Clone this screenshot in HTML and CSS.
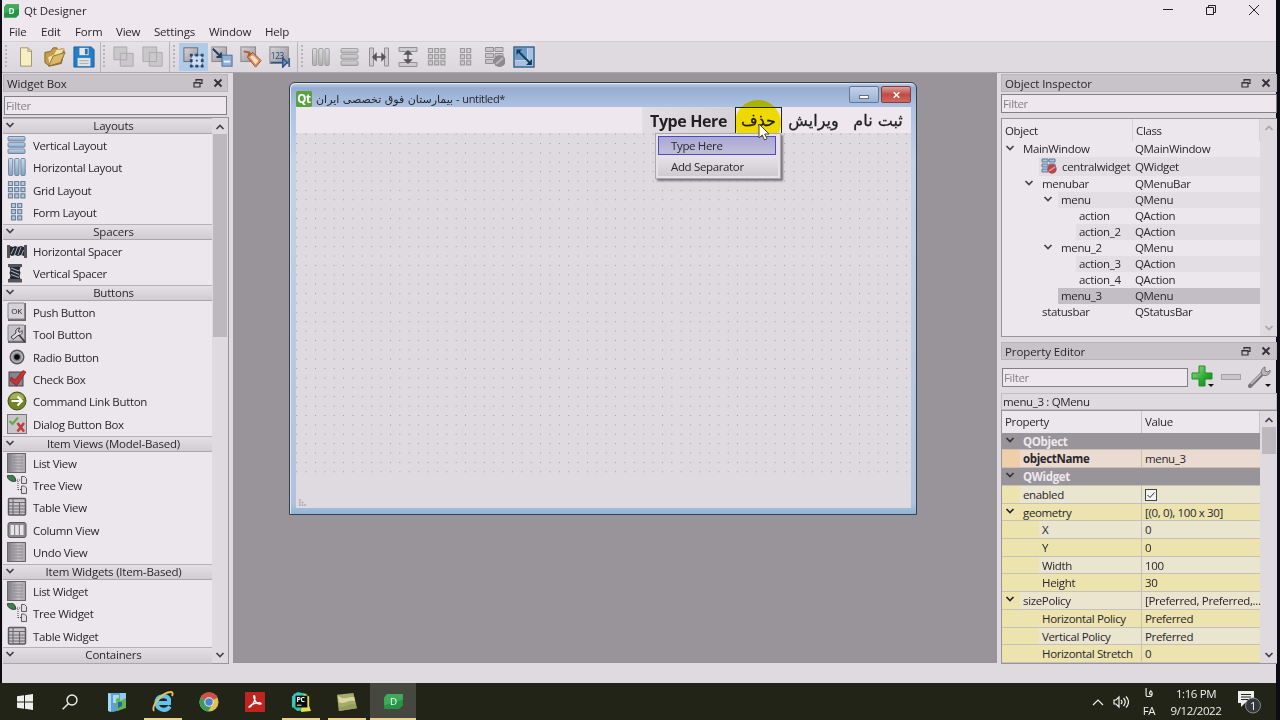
FILE: index.html
```html
<!DOCTYPE html>
<html lang="en">
<head>
    <meta charset="UTF-8">
    <meta name="viewport" content="width=device-width, initial-scale=1.0">
    <title>Qt Designer</title>
    <link rel="stylesheet" href="styles.css">
</head>
<body>
    <!-- shared icons -->
    <svg class="defs" width="0" height="0">
        <defs>
            <linearGradient id="blue" x1="0" y1="0" x2="0" y2="1"><stop offset="0" stop-color="#c9dcee"/><stop offset="1" stop-color="#7fa2c4"/></linearGradient>
            <linearGradient id="grey" x1="0" y1="0" x2="1" y2="1"><stop offset="0" stop-color="#d8d5d9"/><stop offset="1" stop-color="#96949a"/></linearGradient>
            <linearGradient id="green" x1="0" y1="0" x2="1" y2="1"><stop offset="0" stop-color="#9be78d"/><stop offset=".6" stop-color="#26a82c"/><stop offset="1" stop-color="#13801d"/></linearGradient>
            <linearGradient id="list" x1="0" y1="0" x2="1" y2="0"><stop offset="0" stop-color="#7f7c82"/><stop offset=".6" stop-color="#bfbcc0"/><stop offset="1" stop-color="#a9a6ab"/></linearGradient>
            <pattern id="dots" x="0.2" y="0.6" width="9.38" height="9.38" patternUnits="userSpaceOnUse"><rect width="1" height="1" fill="#9c989e"/></pattern>
        </defs>
        <symbol id="chevron" viewBox="0 0 10 10"><path d="M1.5 3l3.5 3.6L8.5 3" fill="none" stroke="currentColor" stroke-width="1.7"/></symbol>
        <symbol id="float" viewBox="0 0 10 10"><path d="M3 3.5V1.5h6v4H7M3 1.8h6M1 4.5h6v4.5H1zM1 5h6" fill="none" stroke="currentColor" stroke-width="1.2"/></symbol>
        <symbol id="cross" viewBox="0 0 10 10"><path d="M1.5 1.5l7 7M8.500 1.500l-7 7" fill="none" stroke="currentColor" stroke-width="1.9"/></symbol>
        <symbol id="rows" viewBox="0 0 20 20"><g stroke="#6b7f98" stroke-width=".9" fill="url(#blue)"><rect x="1" y="1.5" width="17" height="4.5" rx="1"/><rect x="1" y="7.7" width="17" height="4.5" rx="1"/><rect x="1" y="14" width="17" height="4.5" rx="1"/></g></symbol>
        <symbol id="cols" viewBox="0 0 20 20"><g stroke="#6b7f98" stroke-width=".9" fill="url(#blue)"><rect x="1.5" y="1.5" width="4.3" height="17" rx="1"/><rect x="7.7" y="1.5" width="4.3" height="17" rx="1"/><rect x="13.9" y="1.5" width="4.3" height="17" rx="1"/></g></symbol>
        <symbol id="grid" viewBox="0 0 20 20"><path stroke="#6d829c" stroke-width="1.2" fill="#b4cbe1" d="M1.500 1.500h4v4h-4zM7.700 1.500h4v4h-4zM13.900 1.500h4v4h-4zM1.500 7.700h4v4h-4zM7.700 7.700h4v4h-4zM13.900 7.700h4v4h-4zM1.500 13.900h4v4h-4zM7.700 13.900h4v4h-4zM13.900 13.900h4v4h-4z"/></symbol>
        <symbol id="form" viewBox="0 0 20 20"><path stroke="#6d829c" stroke-width="1.2" fill="#b4cbe1" d="M4.500 1.500h4v4h-4zM10.700 1.500h4v4h-4zM4.500 7.700h4v4h-4zM10.700 7.700h4v4h-4zM4.500 13.900h4v4h-4zM10.700 13.900h4v4h-4z"/></symbol>
        <symbol id="hspacer" viewBox="0 0 20 20"><path d="M0 4h3v13H0zM17 4h3v13h-3z" fill="#55545b"/><path d="M3 5l3 1 2-1 3 1 3-1 3 1v9l-3-1-3 1-3-1-3 1-2-1z" fill="#25272e"/><path d="M4 13l3-6M7.500 14l3-8M11 14l3-8M14.500 14l2-5" stroke="#9fb0c4" stroke-width="1"/></symbol>
        <symbol id="vspacer" viewBox="0 0 20 20"><path d="M1 1h14v3H1zM1 16h14v3.500H1z" fill="#55545b"/><path d="M2.500 4h11l-1 3 1 3-1 3 1 3h-11l1-3-1-3 1-3z" fill="#25272e"/><path d="M4 5l8 3M4 8l8 3.500M4 11.500l8 3" stroke="#9fb0c4" stroke-width="1.1"/></symbol>
        <symbol id="tool" viewBox="0 0 20 20"><path d="M1 1h18v18H1z" fill="#6a686d"/><rect x="1" y="1" width="16.5" height="16" rx="1" fill="#c5c3c8" stroke="#87848a"/><path d="M4 13l5-4c-1-3 1-5 4-5l-2 3 2 1.500 2-2c1 3-1 5-4 5l-5 4z" fill="#dddbe0" stroke="#3e3c42"/><path d="M12 11l6 7" stroke="#3e3c42" stroke-width="1.8"/></symbol>
        <symbol id="radio" viewBox="0 0 20 20"><circle cx="10" cy="10" r="6.8" fill="#b3b1b5" stroke="#59575c" stroke-width="1.4"/><circle cx="10" cy="10" r="4.3" fill="#85838a"/><circle cx="10" cy="10" r="2.8" fill="#080808"/></symbol>
        <symbol id="check" viewBox="0 0 20 20"><rect x="2" y="3" width="14" height="14" fill="#87858b" stroke="#444247"/><path d="M4 8l4 3 8-9.500 3 1.500L9.500 17 3.500 12z" fill="#c93235" stroke="#7b1b20" stroke-width=".7"/></symbol>
        <symbol id="command" viewBox="0 0 20 20"><circle cx="10" cy="10" r="9" fill="#718425" stroke="#465415"/><path d="M3 8a7 6 0 0 1 14 0z" fill="#a2b15a"/><path d="M4.500 10h10M10.500 5.500L15 10l-4.500 4.500" fill="none" stroke="#fff" stroke-width="2"/></symbol>
        <symbol id="dialog" viewBox="0 0 20 20"><rect x=".5" y=".5" width="19" height="19" fill="#c9c6ca" stroke="#77747a"/><path d="M2.500 7l3 3 5.500-6.500" fill="none" stroke="#61a94c" stroke-width="2.2"/><path d="M10.500 9l6.500 8.500M17 9l-6.500 8.500" stroke="#c23a3f" stroke-width="2.5"/></symbol>
        <symbol id="listv" viewBox="0 0 20 20"><rect x=".5" y=".5" width="18" height="19" fill="url(#list)" stroke="#68656b"/><path d="M3 4h1.500M6 4h10M3 7h1.500M6 7h10M3 10h1.500M6 10h10M3 13h1.500M6 13h10M3 16h1.500M6 16h10" stroke="#88858b" stroke-width=".8"/></symbol>
        <symbol id="tree" viewBox="0 0 20 20"><path d="M0 1c3-2 7-1 8 2l1 3C5 7.500 1 5 0 1z" fill="#467b50" stroke="#244c30"/><path d="M10 5h4M11 6v9M11 14.500h4" stroke="#444" stroke-dasharray="1 1" fill="none"/><path d="M14.500 1.500h3l2 2v5h-5zM14.500 11h3l2 2v5.500h-5z" fill="#e1dee3" stroke="#5e5b61"/></symbol>
        <symbol id="table" viewBox="0 0 20 20"><rect x="1.5" y="1.5" width="17" height="16.5" rx="1" fill="#c8c5ca" stroke="#5c5a5f" stroke-width="1.5"/><path d="M2 5.500h16M2 9h16M2 12h16M2 15h16M6 2v16M12.500 5v13" stroke="#6b696e" stroke-width="1.1"/></symbol>
        <symbol id="column" viewBox="0 0 20 20"><rect x="1" y="2.5" width="18" height="15" rx="2" fill="#8b898e" stroke="#5a585d"/><path d="M3.500 5h3.500v10H3.500zM8.200 5h3.500v10H8.200zM13 5h3.500v10H13z" fill="#e8e5e9"/></symbol>
    </svg>

    <div class="app">
        <header class="titlebar">
            <svg class="app-icon" viewBox="0 0 20 18"><path d="M3 0h17v14l-4 4H0V4z" fill="#279346"/><path d="M3 0h17v6L0 12V4z" fill="#47b562" opacity=".7"/><text x="10" y="13" font-size="11" font-weight="700" text-anchor="middle" fill="#eafbe9">D</text></svg>
            <span class="app-title">Qt Designer</span>
            <div class="win-buttons">
                <svg viewBox="0 0 12 12"><path d="M1 5.500h10"/></svg>
                <svg viewBox="0 0 12 12"><path d="M1.500 3.500h7v7h-7zM3.500 3.500v-2h7v7h-2"/></svg>
                <svg viewBox="0 0 12 12"><path d="M1 1l10 10M11 1L1 11"/></svg>
            </div>
        </header>
        <nav class="menubar">
            <span class="m-file">File</span><span class="m-edit">Edit</span><span class="m-form">Form</span><span class="m-view">View</span><span class="m-settings">Settings</span><span class="m-window">Window</span><span>Help</span>
        </nav>

        <div class="toolbar">
            <div class="tool-group group-file">
                <svg viewBox="0 0 24 24"><path d="M6 2h8l4 3v17H6z" fill="#f5efc3" stroke="#9b9069"/><path d="M14 2v4h4" fill="#d6c995" stroke="#9b9069" stroke-width=".7"/></svg>
                <svg viewBox="0 0 24 24"><path d="M1 7l6-1 3-4h4l1 3 5-2 2 2-3 14-13 3-5-4z" fill="#c79c4b" stroke="#816127"/><path d="M4 12l7-3 2-5 9-1-4 8-12 10z" fill="#f4e4a3" stroke="#b8934a" stroke-width=".7"/><path d="M5 22l5-11 13-4-5 11z" fill="#dcb969" stroke="#8b692d"/></svg>
                <svg viewBox="0 0 24 24"><path d="M1 1h19l3 3v19H1z" fill="#237fc5" stroke="#1b609b"/><path d="M7 2h10v8H7z" fill="#e7e7e8"/><path d="M13 3h3v6h-3z" fill="#266faa"/><path d="M5 13h14v9H5z" fill="#e2e0e0"/><path d="M7 16h10M7 19h10" stroke="#aaa"/></svg>
            </div>
            <div class="tool-group group-edit">
                <svg viewBox="0 0 24 24"><path d="M1 1h14v14H1zM8 8h14v14H8z" fill="#cbc8cb" stroke="#aaa7ab"/></svg>
                <svg viewBox="0 0 24 24"><path d="M8 7h14v15H8zM1 1h15v16H1z" fill="#cbc8cb" stroke="#aaa7ab"/></svg>
            </div>
            <div class="tool-group group-mode">
                <span class="tool-active"><svg viewBox="0 0 24 24"><rect x="1" y="2" width="15" height="15" fill="url(#grey)" stroke="#65666d"/><rect x="9" y="10" width="12" height="12" fill="#cbdcf3" stroke="#3b5b83" stroke-dasharray="2 1"/><path d="M7.500 8.500h3v3h-3zM13.500 8.500h3v3h-3zM19.500 8.500h3v3h-3zM7.500 14.500h3v3h-3zM19.500 14.500h3v3h-3zM7.500 20.500h3v3h-3zM13.500 20.500h3v3h-3zM19.500 20.500h3v3h-3zM14 15h2v2h-2z" fill="#294570"/></svg></span>
                <svg viewBox="0 0 24 24"><rect x="1" y="1" width="16" height="16" fill="url(#grey)" stroke="#858288"/><path d="M2 3l8 8M11 7v5H6" fill="none" stroke="#263f58" stroke-width="2.2"/><rect x="12" y="10" width="11" height="12" fill="#91b0d9" stroke="#456998"/><path d="M14 16h7v2h-7z" fill="#f1f4ff"/></svg>
                <svg viewBox="0 0 24 24"><rect x="1" y="1" width="16" height="16" fill="url(#grey)" stroke="#858288"/><path d="M4 6l6 1 3 4M10 7l-1 5" fill="none" stroke="#b75d35" stroke-width="2"/><path d="M8 12l6-5 9 9-6 7z" fill="#e3905b" stroke="#8b4b2c"/><path d="M11 12l3-2 6 6-3 4z" fill="#f6dfcc"/></svg>
                <svg viewBox="0 0 24 24"><rect x="1" y="1" width="20" height="18" fill="url(#grey)" stroke="#858288"/><text x="2" y="14" font-size="9" fill="#20467e">123</text><path d="M2 18h12M15 13l5 5-5 5zM22 13v10" fill="#7398cd" stroke="#28548e" stroke-width="1.6"/></svg>
            </div>
            <div class="tool-group group-layout">
                <svg class="muted" viewBox="0 0 20 20"><use href="#cols"/></svg>
                <svg class="muted" viewBox="0 0 20 20"><use href="#rows"/></svg>
                <svg viewBox="0 0 20 20"><path d="M.5 1h4v18h-4zM15.500 1h4v18h-4z" fill="#cecbcf" stroke="#929095"/><path d="M5 10h10M7 7l-3 3 3 3zM13 7l3 3-3 3z" fill="#56555a" stroke="#56555a" stroke-width="1.5"/></svg>
                <svg viewBox="0 0 20 20"><path d="M1 .5h18v4H1zM1 15.500h18v4H1z" fill="#cecbcf" stroke="#929095"/><path d="M10 5v10M7 7l3-3 3 3zM7 13l3 3 3-3z" fill="#56555a" stroke="#56555a" stroke-width="1.5"/></svg>
                <svg class="muted" viewBox="0 0 20 20"><use href="#grid"/></svg>
                <svg class="muted" viewBox="0 0 20 20"><use href="#form"/></svg>
                <svg viewBox="1 1 20 20"><path d="M1.500 1.500h8v4h-8zM11 1.500h8v4h-8zM1.500 7.500h8v4h-8zM11 7.500h8v4h-8zM1.500 13.500h8v4h-8z" fill="#c8c5c9" stroke="#929095"/><circle cx="15.5" cy="15" r="6" fill="#8c8a8f"/><path d="M12 18l7-6" stroke="#bcb9be" stroke-width="2"/></svg>
                <svg class="adjust" viewBox="0 0 22 22"><rect x="1" y="1" width="20" height="20" fill="#a9c1df" stroke="#376593" stroke-width="1.5"/><path d="M2 2h12v12H2z" fill="#6e9ac9"/><path d="M2 14.500h12.500V2" fill="none" stroke="#c4d4e8"/><path d="M5 5l12 12" stroke="#123d5c" stroke-width="1.8"/><path d="M3.500 3.500H9l-5.500 5.500zM19 19h-6l6-6z" fill="#123d5c"/></svg>
            </div>
        </div>

        <main class="workspace">
            <aside class="widget-box">
                <div class="dock-title"><span>Widget Box</span><svg><use href="#float"/></svg><svg><use href="#cross"/></svg></div>
                <div class="filter">Filter</div>
                <div class="widget-frame">
                    <div class="widget-list">
                        <div class="group"><svg><use href="#chevron"/></svg>Layouts</div>
                        <div class="widget"><svg><use href="#rows"/></svg>Vertical Layout</div>
                        <div class="widget"><svg><use href="#cols"/></svg>Horizontal Layout</div>
                        <div class="widget"><svg><use href="#grid"/></svg>Grid Layout</div>
                        <div class="widget"><svg><use href="#form"/></svg>Form Layout</div>
                        <div class="group"><svg><use href="#chevron"/></svg>Spacers</div>
                        <div class="widget"><svg><use href="#hspacer"/></svg>Horizontal Spacer</div>
                        <div class="widget"><svg><use href="#vspacer"/></svg>Vertical Spacer</div>
                        <div class="group"><svg><use href="#chevron"/></svg>Buttons</div>
                        <div class="widget"><svg viewBox="0 0 20 20"><path d="M1 1h18v18H1z" fill="#6a686d"/><rect x="1" y="1" width="16.5" height="16" rx="1" fill="#d6d3d8" stroke="#87848a"/><text x="9.5" y="12" font-size="8" text-anchor="middle" fill="#222">OK</text></svg>Push Button</div>
                        <div class="widget"><svg><use href="#tool"/></svg>Tool Button</div>
                        <div class="widget"><svg><use href="#radio"/></svg>Radio Button</div>
                        <div class="widget"><svg><use href="#check"/></svg>Check Box</div>
                        <div class="widget"><svg><use href="#command"/></svg>Command Link Button</div>
                        <div class="widget"><svg><use href="#dialog"/></svg>Dialog Button Box</div>
                        <div class="group"><svg><use href="#chevron"/></svg>Item Views (Model-Based)</div>
                        <div class="widget"><svg><use href="#listv"/></svg>List View</div>
                        <div class="widget"><svg><use href="#tree"/></svg>Tree View</div>
                        <div class="widget"><svg><use href="#table"/></svg>Table View</div>
                        <div class="widget"><svg><use href="#column"/></svg>Column View</div>
                        <div class="widget"><svg><use href="#listv"/></svg>Undo View</div>
                        <div class="group"><svg><use href="#chevron"/></svg>Item Widgets (Item-Based)</div>
                        <div class="widget"><svg><use href="#listv"/></svg>List Widget</div>
                        <div class="widget"><svg><use href="#tree"/></svg>Tree Widget</div>
                        <div class="widget"><svg><use href="#table"/></svg>Table Widget</div>
                        <div class="group"><svg><use href="#chevron"/></svg>Containers</div>
                    </div>
                    <div class="scrollbar"><svg class="up"><use href="#chevron"/></svg><div class="thumb"></div><svg class="down"><use href="#chevron"/></svg></div>
                </div>
            </aside>

            <section class="mdi">
                <div class="form-window">
                    <div class="form-title">
                        <svg class="qt" viewBox="0 0 16 16"><rect width="16" height="16" rx="1.5" fill="#5ba041"/><text x="8" y="12" font-size="11.5" font-weight="700" text-anchor="middle" fill="#fff">Qt</text></svg>
                        <span class="form-name"><bdi class="persian">بیمارستان فوق تخصصی ایران</bdi> - untitled*</span>
                        <div class="mdi-min"><i></i></div>
                        <div class="mdi-close"><svg><use href="#cross"/></svg></div>
                    </div>
                    <div class="form-body">
                        <div class="form-menu" dir="rtl">
                            <span class="item-new">ثبت نام</span>
                            <span class="item-edit">ویرایش</span>
                            <span class="item-delete">حذف</span>
                            <span class="item-type" dir="ltr">Type Here</span>
                        </div>
                        <svg class="dot-grid"><rect width="100%" height="100%" fill="url(#dots)"/></svg>
                        <div class="form-status"><svg viewBox="0 0 10 10"><path d="M1 1h2v2H1zM1 4h2v2H1zM1 7h2v2H1zM4 4h2v2H4zM4 7h2v2H4zM7 7h2v2H7z" fill="#b1adb3"/></svg></div>
                    </div>
                    <div class="highlight"></div>
                    <div class="popup">
                        <div class="popup-item selected">Type Here</div>
                        <div class="popup-item">Add Separator</div>
                    </div>
                    <svg class="cursor" viewBox="0 0 12 18"><path d="M1 1v14l3.200-3 2.300 5 2.500-1.200-2.300-4.800H11z" fill="#fff" stroke="#4e4929"/></svg>
                </div>
            </section>

            <aside class="right-docks">
                <div class="dock-title"><span>Object Inspector</span><svg><use href="#float"/></svg><svg><use href="#cross"/></svg></div>
                <div class="filter">Filter</div>
                <div class="inspector">
                    <div class="tree">
                        <div class="tree-head"><span>Object</span><span>Class</span></div>
                        <div class="node"><svg><use href="#chevron"/></svg><span class="name">MainWindow</span><span class="cls">QMainWindow</span></div>
                        <div class="node level-1 alt central"><span class="name"><svg viewBox="0 0 16 16"><path d="M1 1h6v3H1zM8 1h6v3H8zM1 6h6v3H1zM8 6h6v3H8zM1 11h6v3H1z" fill="#a9c2db" stroke="#607b98"/><circle cx="11" cy="11" r="4.7" fill="#b6474c"/><path d="M8 13l6-4" stroke="#dfa4a4" stroke-width="1.5"/></svg>centralwidget</span><span class="cls">QWidget</span></div>
                        <div class="node level-1"><svg><use href="#chevron"/></svg><span class="name">menubar</span><span class="cls">QMenuBar</span></div>
                        <div class="node level-2 alt"><svg><use href="#chevron"/></svg><span class="name">menu</span><span class="cls">QMenu</span></div>
                        <div class="node level-3"><span class="name">action</span><span class="cls">QAction</span></div>
                        <div class="node level-3 alt"><span class="name">action_2</span><span class="cls">QAction</span></div>
                        <div class="node level-2"><svg><use href="#chevron"/></svg><span class="name">menu_2</span><span class="cls">QMenu</span></div>
                        <div class="node level-3 alt"><span class="name">action_3</span><span class="cls">QAction</span></div>
                        <div class="node level-3"><span class="name">action_4</span><span class="cls">QAction</span></div>
                        <div class="node level-2 current"><span class="name">menu_3</span><span class="cls">QMenu</span></div>
                        <div class="node level-1"><span class="name">statusbar</span><span class="cls">QStatusBar</span></div>
                    </div>
                    <div class="scrollbar disabled"><svg class="up"><use href="#chevron"/></svg><svg class="down"><use href="#chevron"/></svg></div>
                </div>

                <div class="dock-title property-title"><span>Property Editor</span><svg><use href="#float"/></svg><svg><use href="#cross"/></svg></div>
                <div class="property-tools">
                    <div class="filter">Filter</div>
                    <svg class="plus" viewBox="0 0 24 24"><path d="M8 1h6v7h7v6h-7v7H8v-7H1V8h7z" fill="url(#green)" stroke="#28862a"/><path d="M17 19h6l-3 3z" fill="#111"/></svg>
                    <svg class="minus" viewBox="0 0 20 6"><rect x=".5" y=".5" width="19" height="5" fill="#c8c5c9" stroke="#a5a2a7"/></svg>
                    <svg class="wrench" viewBox="0 0 24 24"><path d="M2 21L15 8" stroke="#77757a" stroke-width="4" stroke-linecap="round"/><path d="M3 19L15 7" stroke="#c6c4c9" stroke-width="1.5"/><path d="M14 10c-2-3 0-7 3-8v4l3 1 2-2c1 4-4 7-8 5z" fill="#b6b4b9" stroke="#77757a"/><path d="M17 19h6l-3 3z" fill="#111"/></svg>
                </div>
                <div class="object-label">menu_3 : QMenu</div>
                <div class="properties">
                    <div class="prop-table">
                        <div class="prop-head"><span>Property</span><span>Value</span></div>
                        <div class="prop section"><svg><use href="#chevron"/></svg><span>QObject</span></div>
                        <div class="prop peach"><b>objectName</b><span>menu_3</span></div>
                        <div class="prop section"><svg><use href="#chevron"/></svg><span>QWidget</span></div>
                        <div class="prop light"><span>enabled</span><span><svg class="checkbox" viewBox="0 0 12 12"><rect x=".5" y=".5" width="11" height="11" fill="#f5f1f5" stroke="#444"/><path d="M2.500 6l2.500 2.500 4.500-5" fill="none" stroke="#333"/></svg></span></div>
                        <div class="prop"><svg><use href="#chevron"/></svg><span>geometry</span><span>[(0, 0), 100 x 30]</span></div>
                        <div class="prop light sub"><span>X</span><span>0</span></div>
                        <div class="prop sub"><span>Y</span><span>0</span></div>
                        <div class="prop light sub"><span>Width</span><span>100</span></div>
                        <div class="prop sub"><span>Height</span><span>30</span></div>
                        <div class="prop light"><svg><use href="#chevron"/></svg><span>sizePolicy</span><span>[Preferred, Preferred,...</span></div>
                        <div class="prop sub"><span>Horizontal Policy</span><span>Preferred</span></div>
                        <div class="prop light sub"><span>Vertical Policy</span><span>Preferred</span></div>
                        <div class="prop sub"><span>Horizontal Stretch</span><span>0</span></div>
                    </div>
                    <div class="scrollbar"><svg class="up"><use href="#chevron"/></svg><div class="thumb"></div><svg class="down"><use href="#chevron"/></svg></div>
                </div>
            </aside>
        </main>
        <div class="statusbar"></div>
    </div>

    <footer class="taskbar">
        <div class="task start"><svg viewBox="0 0 16 16"><path d="M0 2.300l7-1v6.200H0zM8 1.200L16 0v7.500H8zM0 8.500h7v6.200l-7-1zM8 8.500h8V16l-8-1.200z" fill="#eee"/></svg></div>
        <div class="task search"><svg viewBox="0 0 16 16"><circle cx="10" cy="6" r="5" fill="none" stroke="#eee" stroke-width="1.4"/><path d="M6.500 9.500L.7 15.300" stroke="#eee" stroke-width="1.4"/></svg></div>
        <div class="task"><svg viewBox="0 0 20 20"><path d="M1 1h12v17l-7 2-5-1z" fill="#5f9fd2"/><path d="M1 1l3 1v18l-3-1z" fill="#a2d8f0"/><path d="M6 3h6v8H6z" fill="#a8d9f2"/><path d="M9 7l10-5v14l-9 3z" fill="#62b557"/><path d="M13 1h6v5l-6 3z" fill="#8fcbed"/><path d="M11 10h4v4l-4 2z" fill="#2965a5"/></svg></div>
        <div class="task running ie"><svg viewBox="0 0 22 22"><path d="M18 15.500C13 22 4.500 18 4.500 11.500S14 3 17 8v4H6" fill="none" stroke="#62c2ed" stroke-width="4"/><path d="M2 20C-1 15 10 1 19 1c2 0 2 2 1 4" fill="none" stroke="#e7c153" stroke-width="1.8"/></svg></div>
        <div class="task"><svg viewBox="0 0 22 22"><circle cx="11" cy="11" r="10.5" fill="#ddc153"/><path d="M11 11L1.800 6A10.500 10.500 0 0 1 20.500 6z" fill="#ce5145"/><path d="M11 11L1.800 6A10.500 10.500 0 0 0 10 21.500l4-7z" fill="#40995a"/><circle cx="11" cy="11" r="5.2" fill="#eee"/><circle cx="11" cy="11" r="4.1" fill="#4a82cc"/></svg></div>
        <div class="task"><svg viewBox="0 0 20 20"><rect width="20" height="20" rx="1" fill="#bf2520"/><path d="M4 15c2 1 6-6 6-9 0-3-2-3-1 0 1 4 4 7 7 6 1-2-8-2-12 3z" fill="none" stroke="#fff" stroke-width="1.3"/></svg></div>
        <div class="task running"><svg class="pc" viewBox="0 0 22 22"><path d="M1 5l6-5 10 2 3 8-3 10-10 1-6-5z" fill="#2fc69b"/><path d="M14 2l6 3v10l2 6-11 1z" fill="#e7df55"/><path d="M3 2l8-1-7 12-3 5z" fill="#42c4d0"/><path d="M5 4h13v13H5z" fill="#080b09"/><text x="6" y="11" font-size="7.5" font-weight="700" fill="#fff">PC</text><path d="M6.500 14.500h5" stroke="#fff"/></svg></div>
        <div class="task running notes"><svg viewBox="0 0 22 20"><path d="M0 2l18-2 4 17-20 3z" fill="#a5ac68"/><path d="M1 3c8 6 12 0 18 2l1 4C13 6 8 14 2 10z" fill="#d8d7a3"/><path d="M2 15c7 2 11-5 19-2v4L3 20z" fill="#949d61"/></svg></div>
        <div class="task running active"><svg viewBox="0 0 20 16"><path d="M3 0h17v12l-4 4H0V4z" fill="#279346"/><path d="M3 0h17v6L0 12V4z" fill="#47b562" opacity=".7"/><text x="10" y="12" font-size="10.5" text-anchor="middle" fill="#eafbe9">D</text></svg></div>
        <div class="tray">
            <svg class="tray-up" viewBox="0 0 12 8"><path d="M1 7l5-5 5 5"/></svg>
            <svg class="volume" viewBox="0 0 16 14"><path d="M1 5h2l3-3v10L3 9H1zM8 5q2 2 0 4M10.500 3q3.500 4 0 8M13 1.500q5 5.500 0 11"/></svg>
            <div class="lang"><span class="persian">فا</span><span>FA</span></div>
            <div class="clock"><span>1:16 PM</span><span>9/12/2022</span></div>
            <svg class="notify" viewBox="0 0 24 24"><path d="M1 1h16v12H8l-4 4v-4H1z" fill="#eee"/><path d="M4 4.500h10M4 7h10M4 9.500h8" stroke="#222419"/><circle cx="16" cy="15.5" r="7.5" fill="#35373a" stroke="#8a8c88"/><text x="16" y="19.5" font-size="11" text-anchor="middle" fill="#fff">1</text></svg>
        </div>
    </footer>
</body>
</html>
```

FILE: styles.css
```css
* {
    box-sizing: border-box;
}
body {
    margin: 0;
    width: 1280px;
    height: 720px;
    overflow: hidden;
    background: #0d0b14;
    color: #29262c;
    font-family: "Open Sans", "Noto Sans", sans-serif;
    font-size: 11.5px;
    letter-spacing: -0.35px;
    line-height: 16px;
    white-space: nowrap;
}
svg {
    display: block;
    flex: none;
}
.defs {
    position: absolute;
}
.persian {
    font-family: "DejaVu Sans", sans-serif;
    letter-spacing: 0;
}
.app {
    width: 1274px;
    height: 683px;
    margin-left: 2px;
    background: #dfdae0;
}

/* main window chrome */
.titlebar {
    display: flex;
    align-items: center;
    height: 22px;
    padding-left: 2px;
    background: #eee8ee;
}
.app-icon {
    width: 15px;
    height: 14px;
}
.app-title {
    margin-left: 5px;
    letter-spacing: -0.1px;
}
.win-buttons {
    display: flex;
    gap: 31px;
    margin: -2px 0 0 auto;
    padding-right: 16px;
}
.win-buttons svg {
    width: 12px;
    height: 12px;
    fill: none;
    stroke: #222;
}
.menubar {
    display: flex;
    height: 19px;
    padding: 2px 0 0 7px;
    background: #eee8ee;
    letter-spacing: -0.2px;
}
.m-file { width: 32px; }
.m-edit { width: 34px; }
.m-form { width: 41px; }
.m-view { width: 38px; }
.m-settings { width: 55px; }
.m-window { width: 56px; }
.toolbar {
    display: flex;
    height: 32px;
    border-top: 1px solid #d3ced4;
    border-bottom: 1px solid #aaa5ab;
    background: #dfdae0;
}
.tool-group {
    display: flex;
    align-items: center;
    gap: 7px;
    border-right: 1px solid #b9b4ba;
    background: linear-gradient(#e6e1e7, #dcd7dd);
}
.tool-group::before {
    content: "";
    width: 2px;
    height: 24px;
    background: repeating-linear-gradient(#b8b4b9 0 2px, transparent 2px 4px);
}
.tool-group svg {
    width: 22px;
    height: 22px;
}
.group-file {
    width: 99px;
    padding-left: 3px;
}
.group-file::before {
    margin-right: 1px;
}
.group-edit {
    width: 69px;
    padding-left: 2px;
}
.group-edit::before {
    margin-right: 1px;
}
.group-mode {
    width: 128px;
    padding-left: 3px;
}
.group-mode::before {
    margin-right: -3px;
}
.group-layout {
    gap: 9px;
    padding-left: 3px;
    border: 0;
}
.group-layout::before {
    margin-right: -1px;
}
.group-layout svg {
    width: 20px;
    height: 20px;
}
.group-layout .adjust {
    width: 22px;
    height: 22px;
    margin-left: -1px;
}
.tool-active {
    width: 29px;
    height: 28px;
    padding: 3px 4px;
    background: #b0cbe7;
}
.tool-active + svg {
    margin-left: -4px;
}
.muted {
    filter: grayscale(1);
    opacity: 0.7;
}

/* docks */
.workspace {
    display: flex;
    height: 590px;
}
.dock-title {
    display: flex;
    align-items: center;
    height: 18px;
    padding: 1px 5px 0 3px;
    border: 1px solid #b9b4ba;
    background: #c8c3c9;
    letter-spacing: -0.1px;
}
.dock-title span {
    flex: 1;
    padding-top: 1px;
}
.dock-title svg {
    width: 10px;
    height: 10px;
    margin: -1px 0 0 10px;
    color: #343137;
}
.filter {
    height: 19px;
    padding-left: 1px;
    border: 1px solid #827f85;
    background: #eee8ee;
    color: #858087;
    line-height: 18px;
}
.widget-box {
    width: 227px;
    padding: 1px 1px 0 1px;
}
.widget-box .dock-title {
    padding-right: 4px;
}
.widget-box .filter {
    margin: 4px 1px 2px;
}
.widget-frame {
    display: flex;
    height: 547px;
    margin-right: -1px;
    border: 1px solid #99949a;
    border-left: 0;
}
.widget-list {
    width: 209px;
    background: #ece7ed;
}
.group {
    display: flex;
    align-items: center;
    justify-content: center;
    height: 16.3px;
    padding-left: 12px;
    border-top: 1px solid #b5b0b6;
    border-bottom: 1px solid #aaa6ab;
    background: linear-gradient(#e4dfe5, #d1ccd2);
    letter-spacing: -0.2px;
}
.group svg {
    width: 10px;
    height: 10px;
    margin: -2px auto 0 -10px;
    color: #454248;
}
.group::after {
    content: "";
    margin-left: auto;
}
.widget {
    display: flex;
    align-items: center;
    height: 22.4px;
    padding: 1px 0 0 4px;
    gap: 6px;
}
.widget svg {
    width: 20px;
    height: 20px;
    margin-top: -2px;
}
.scrollbar {
    display: flex;
    flex: 1;
    flex-direction: column;
    align-items: center;
    background: #dfdae0;
    color: #454248;
}
.scrollbar svg {
    width: 10px;
    height: 10px;
}
.scrollbar .up {
    margin: 4px 0 2px;
    transform: rotate(180deg);
}
.scrollbar .down {
    margin: auto 0 3px;
}
.scrollbar .thumb {
    width: 14px;
    height: 203px;
    background: #bdb8be;
}
.scrollbar.disabled {
    color: #aaa6ab;
}

/* form being edited */
.mdi {
    width: 764px;
    margin-left: 4px;
    padding: 9px 0 0 56px;
    background: #99949a;
}
.form-window {
    position: relative;
    width: 628px;
    height: 433px;
    padding: 0 5px 6px 6px;
    border: 1px solid #35404d;
    border-radius: 6px 6px 0 0;
    background: linear-gradient(#c4d2e8, #97add0 5px, #adc2e2 24px, #c4d2e8 80px, #b2c1dd 420px, #8eb6d5);
    box-shadow: inset 1px 1px #dce7f4;
}
.form-title {
    display: flex;
    align-items: center;
    height: 24px;
    padding-top: 7px;
}
.qt {
    width: 16px;
    height: 16px;
}
.form-name {
    margin: 2px 0 0 4px;
    font-size: 11px;
}
.form-name .persian {
    font-size: 11px;
}
.mdi-min, .mdi-close {
    display: flex;
    align-items: center;
    justify-content: center;
    width: 30px;
    height: 17px;
    margin: -8px 0 0 auto;
    border: 1px solid #60789b;
    border-radius: 2px;
    background: linear-gradient(#c2d1e9, #9bb2d4);
}
.mdi-min i {
    width: 10px;
    height: 4px;
    margin-top: 4px;
    border: 1px solid #666d7b;
    background: #fff;
}
.mdi-close {
    margin-left: 2px;
    border-color: #813f43;
    background: linear-gradient(#dda19c, #bf4b45 50%, #ce6a60);
    color: #fff;
}
.mdi-close svg {
    width: 9px;
    height: 8px;
}
.form-body {
    height: 401px;
    background: #dfdae0;
}
.form-menu {
    display: flex;
    height: 26px;
    background: #eee8ee;
    color: #211f24;
    font-family: "DejaVu Sans", sans-serif;
    font-size: 16px;
    letter-spacing: 0;
    line-height: 28px;
    text-align: center;
    -webkit-text-stroke: 0.3px #211f24;
}
.item-new {
    width: 66px;
}
.item-edit {
    width: 63px;
}
.item-delete {
    width: 47px;
    border: 1px solid #222;
    border-bottom: 0;
    line-height: 26px;
}
.item-type {
    width: 93px;
    background: linear-gradient(90deg, #e2dde3, #d6d1d7);
    font-family: "Open Sans", sans-serif;
    font-weight: 700;
    letter-spacing: -0.4px;
    -webkit-text-stroke: 0;
}
.dot-grid {
    width: 615px;
    height: 347px;
}
.form-status {
    padding: 18px 0 0 2px;
}
.form-status svg {
    width: 9px;
    height: 9px;
}
.highlight {
    position: absolute;
    left: 445px;
    top: 17px;
    width: 46px;
    height: 46px;
    border-radius: 50%;
    background: #fff000;
    mix-blend-mode: multiply;
}
.popup {
    position: absolute;
    left: 365px;
    top: 50px;
    width: 126px;
    height: 46px;
    padding: 2px;
    border: 1px solid #aba7ad;
    background: #e6e1e7;
    box-shadow: 2px 2px 2px #77737a;
}
.popup-item {
    height: 20px;
    margin-bottom: 1px;
    padding-left: 13px;
    background: linear-gradient(#e7e2e8, #cfcbd1);
    line-height: 22px;
}
.popup-item.selected {
    width: 118px;
    height: 19px;
    margin-left: 0;
    padding-left: 12px;
    border: 1px solid #4a4ac2;
    background: linear-gradient(#aaa8d6, #c2bed9);
    line-height: 18px;
}
.cursor {
    position: absolute;
    left: 468px;
    top: 40px;
    width: 12px;
    height: 18px;
}

/* object inspector and property editor */
.right-docks {
    width: 276px;
    margin-left: 3px;
    padding: 1px 0 0 1px;
}
.right-docks > * {
    margin-right: -1px;
}
.right-docks > .filter {
    margin-top: 2px;
}
.inspector {
    display: flex;
    height: 219px;
    margin-top: 5px;
    border: 1px solid #99949a;
    border-right: 0;
}
.tree, .prop-table {
    flex: none;
    width: 258px;
    background: #ece7ed;
}
.tree-head {
    display: flex;
    height: 22px;
    line-height: 23px;
}
.tree-head span {
    width: 131px;
    padding-left: 3px;
    border-right: 1px solid #d6d1d7;
}
.tree-head span + span {
    width: 127px;
}
.node {
    position: relative;
    display: flex;
    height: 16px;
    margin-left: 18px;
    padding-left: 3px;
}
.node > svg {
    width: 10px;
    height: 10px;
    margin: 2px 8px 0 -18px;
    color: #454248;
}
.cls {
    width: 125px;
    margin-left: auto;
}
.level-1 { margin-left: 37px; }
.level-2 { margin-left: 56px; }
.level-3 { margin-left: 74px; }
.alt {
    background: #e3dee4;
}
.current {
    background: #c3bec5;
}
.central {
    height: 18.5px;
    line-height: 19px;
}
.central .name {
    display: flex;
    align-items: center;
    gap: 5px;
}
.central svg {
    width: 16px;
    height: 16px;
    margin-left: -1px;
}
.property-title {
    margin-top: 5px;
}
.property-tools {
    display: flex;
    align-items: center;
    height: 33px;
    padding: 1px 0 0 1px;
}
.property-tools .filter {
    width: 186px;
    height: 19px;
}
.plus {
    width: 24px;
    height: 24px;
    margin-left: 3px;
}
.minus {
    width: 20px;
    height: 6px;
    margin-left: 6px;
}
.wrench {
    width: 24px;
    height: 24px;
    margin-left: 7px;
}
.object-label {
    height: 17px;
    padding-left: 1px;
    border: 1px solid #c1bcc2;
    line-height: 16px;
}
.properties {
    display: flex;
    height: 254px;
    border: 1px solid #99949a;
    border-right: 0;
}
.prop-head {
    display: flex;
    height: 21.6px;
    line-height: 22px;
}
.prop-head span {
    flex: none;
    width: 140px;
    padding-left: 3px;
    border-right: 1px solid #c9c4ca;
}
.prop-head span + span {
    width: 118px;
}
.prop {
    position: relative;
    display: grid;
    grid-template-columns: 140px 118px;
    height: 17.74px;
    border-bottom: 1px solid #c5c0b9;
    background: #ece3af;
    line-height: 18px;
}
.prop > :not(svg) {
    padding-left: 21px;
    border-right: 1px solid #c5c0b9;
}
.prop > :last-child {
    padding-left: 3px;
    border: 0;
}
.prop > svg {
    position: absolute;
    left: 3px;
    top: 2px;
    width: 10px;
    height: 10px;
}
.prop.light {
    background: linear-gradient(90deg, #ece3af 18px, #eae5cf 18px);
}
.prop.light.sub {
    background: linear-gradient(90deg, #ece3af 37px, #eae5cf 37px);
}
.prop.sub > :first-child {
    padding-left: 40px;
}
.prop.peach {
    background: linear-gradient(90deg, #efcfaa 18px, #ebdacf 18px);
}
.prop.section {
    background: #99949a;
    color: #eee8ee;
    font-weight: 700;
}
.prop.section > :last-child {
    padding-left: 21px;
}
.prop.section svg {
    color: #343137;
}
.checkbox {
    width: 12px;
    height: 12px;
    margin-top: 3px;
}
.properties .thumb {
    height: 27px;
}

/* taskbar */
.taskbar {
    display: flex;
    height: 37px;
    margin-right: 4px;
    padding-left: 2px;
    background: #222417;
    color: #eee;
}
.task {
    display: flex;
    align-items: center;
    justify-content: center;
    width: 46px;
    height: 37px;
}
.task svg {
    width: 20px;
    height: 20px;
}
.task.start svg, .task.search svg {
    width: 16px;
    height: 16px;
}
.task.search {
    padding-right: 2px;
}
.running {
    background: linear-gradient(#ecd189, #ecd189) center bottom / 38px 2px no-repeat;
}
.task.ie svg {
    width: 22px;
    height: 22px;
}
.task.active {
    background: linear-gradient(#ecd189, #ecd189) center bottom / 46px 2px no-repeat, #46483f;
}
.task.active svg {
    width: 19px;
    height: 15px;
}
.tray {
    display: flex;
    align-items: center;
    margin-left: auto;
    padding-right: 15px;
}
.tray-up, .volume {
    width: 12px;
    height: 8px;
    fill: none;
    stroke: #eee;
    stroke-width: 1.2;
}
.volume {
    width: 16px;
    height: 14px;
    margin-left: 9px;
}
.lang, .clock {
    display: flex;
    flex-direction: column;
    width: 26px;
    margin-left: 7px;
    line-height: 17px;
    text-align: center;
}
.clock {
    width: 56px;
    margin-left: 6px;
    letter-spacing: -0.4px;
}
.notify {
    width: 24px;
    height: 24px;
    margin-left: 13px;
}
```
